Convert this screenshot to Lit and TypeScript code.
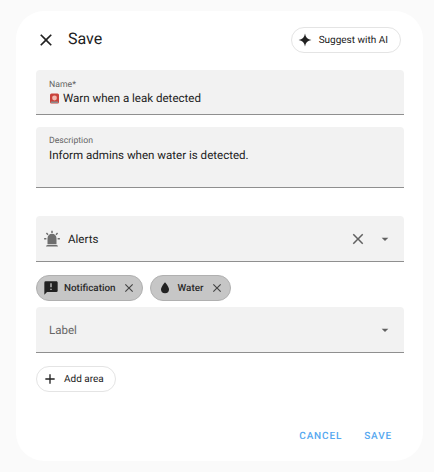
import { LitElement, css, html, svg } from "lit";
import { customElement } from "lit/decorators.js";

const CLOSE = "M19,6.41L17.59,5L12,10.59L6.41,5L5,6.41L10.59,12L5,17.59L6.41,19L12,13.41L17.59,19L19,17.59L13.41,12L19,6.41Z";
const PLUS = "M19,13H13V19H11V13H5V11H11V5H13V11H19V13Z";
const MENU_DOWN = "M7,10L12,15L17,10H7Z";
const ALARM = "M6,6.9L3.87,4.78L5.28,3.37L7.4,5.5L6,6.9M13,1V4H11V1H13M20.13,4.78L18,6.9L16.6,5.5L18.72,3.37L20.13,4.78M4.5,10.5V12.5H1.5V10.5H4.5M19.5,10.5H22.5V12.5H19.5V10.5M6,20H18A2,2 0 0,1 20,22H4A2,2 0 0,1 6,20M12,5A6,6 0 0,1 18,11V19H6V11A6,6 0 0,1 12,5Z";
const MESSAGE = "M20,2H4A2,2 0 0,0 2,4V22L6,18H20A2,2 0 0,0 22,16V4C22,2.89 21.1,2 20,2M13,11H11V5H13V11M13,15H11V13H13V15Z";
const WATER = "M12,20A6,6 0 0,1 6,14C6,10 12,3.25 12,3.25C12,3.25 18,10 18,14A6,6 0 0,1 12,20Z";
const SPARKLE = "M12,1C12.8,7.5 16.5,11.2 23,12C16.5,12.8 12.8,16.5 12,23C11.2,16.5 7.5,12.8 1,12C7.5,11.2 11.2,7.5 12,1Z";

const icon = (d: string, size: number, color: string) => html`<svg
  class="icon"
  width=${size}
  height=${size}
  viewBox="0 0 24 24"
  fill=${color}
>${svg`<path d=${d}></path>`}</svg>`;

@customElement("app-root")
export class AppRoot extends LitElement {
  static styles = css`
    :host {
      display: block;
      height: 472px;
      box-sizing: border-box;
      padding: 11px 11px 11px 16px;
      background: #fafafa;
      font-family: Roboto, "Liberation Sans", sans-serif;
      color: #212121;
      text-rendering: geometricPrecision;
    }
    .icon {
      display: block;
      flex: none;
    }
    .dialog {
      box-sizing: border-box;
      height: 450px;
      background: #fff;
      border-radius: 28px;
      padding: 16px 19px 0 20px;
    }
    .header {
      display: flex;
      align-items: center;
      box-sizing: border-box;
      height: 43px;
      padding-bottom: 17px;
    }
    .title {
      margin-left: 12px;
      font-size: 16px;
      line-height: 24px;
      position: relative;
      top: -1px;
    }
    .header .pill {
      margin-left: auto;
      margin-right: 3px;
      height: 26px;
      padding: 0 12px 0 6px;
      gap: 7px;
      font-size: 10px;
    }
    .pill {
      display: inline-flex;
      align-items: center;
      box-sizing: border-box;
      border: 1px solid #e4e4e4;
      border-radius: 13px;
      background: #fff;
      color: #212121;
    }
    .field {
      box-sizing: border-box;
      background: #f2f2f2;
      border-bottom: 1px solid #8f8f8f;
      border-radius: 4px 4px 0 0;
      padding: 0 13px;
    }
    .name {
      height: 45px;
      padding-top: 9px;
    }
    .desc {
      height: 61px;
      margin-top: 12px;
      padding-top: 8px;
    }
    .small {
      font-size: 8.7px;
      line-height: 12px;
      color: #666;
    }
    .value {
      font-size: 11.55px;
      line-height: 16px;
      display: flex;
      align-items: center;
      gap: 3px;
    }
    .name .value {
      margin-top: -1px;
    }
    .picker {
      display: flex;
      align-items: center;
      height: 46px;
      font-size: 11.55px;
      padding: 0 11px 0 7px;
    }
    .alerts {
      margin-top: 28px;
    }
    .picker .text {
      flex: 1;
      margin-left: 7px;
    }
    .label-field {
      margin-top: 6px;
      padding-left: 13px;
      color: #666;
    }
    .label-field .text {
      margin-left: 0;
    }
    .clear {
      margin-right: 10px;
    }
    .chips {
      display: flex;
      gap: 7px;
      margin-top: 13px;
    }
    .chip {
      display: flex;
      align-items: center;
      box-sizing: border-box;
      height: 26px;
      border: 1px solid #b0b0b0;
      border-radius: 13px;
      background: #c6c6c6;
      font-size: 9.9px;
      font-weight: 500;
      color: #2b2b2b;
      padding: 0 6px;
    }
    .chip .label {
      margin: 0 6px 0 5px;
    }
    .add {
      display: flex;
      margin-top: 13px;
      width: 80px;
      height: 26px;
      padding-left: 5px;
      gap: 6px;
      font-size: 10px;
    }
    .actions {
      display: flex;
      justify-content: flex-end;
      gap: 22px;
      margin-top: 37px;
      padding-right: 12px;
      font-size: 10px;
      font-weight: 500;
      letter-spacing: 0.85px;
      line-height: 16px;
      color: #56a8f0;
    }
  `;

  render() {
    return html`
      <div class="dialog">
        <div class="header">
          <span>${icon(CLOSE, 20, "#212121")}</span>
          <span class="title">Save</span>
          <span class="pill">${icon(SPARKLE, 14, "#212121")}Suggest with AI</span>
        </div>
        <div class="field name">
          <div class="small">Name*</div>
          <div class="value">
            <svg class="icon" width="11" height="11" viewBox="0 0 11 11">
              <rect x="1" y="0.5" width="9" height="10" rx="1.5" fill="#c9433c"></rect>
              <circle cx="5.5" cy="5" r="2.4" fill="#f3b9b0"></circle>
              <rect x="2" y="8.5" width="7" height="1.5" fill="#8c8c8c"></rect>
            </svg>
            <span>Warn when a leak detected</span>
          </div>
        </div>
        <div class="field desc">
          <div class="small">Description</div>
          <div class="value">Inform admins when water is detected.</div>
        </div>
        <div class="field picker alerts">
          ${icon(ALARM, 18, "#6e6e6e")}
          <span class="text">Alerts</span>
          <span class="clear">${icon(CLOSE, 18, "#616161")}</span>
          ${icon(MENU_DOWN, 16, "#616161")}
        </div>
        <div class="chips">
          <div class="chip">
            ${icon(MESSAGE, 16, "#212121")}<span class="label">Notification</span>${icon(CLOSE, 14, "#444")}
          </div>
          <div class="chip">
            ${icon(WATER, 16, "#212121")}<span class="label">Water</span>${icon(CLOSE, 14, "#444")}
          </div>
        </div>
        <div class="field picker label-field">
          <span class="text">Label</span>
          ${icon(MENU_DOWN, 16, "#616161")}
        </div>
        <div class="pill add">${icon(PLUS, 16, "#212121")}Add area</div>
        <div class="actions"><span>CANCEL</span><span>SAVE</span></div>
      </div>
    `;
  }
}
